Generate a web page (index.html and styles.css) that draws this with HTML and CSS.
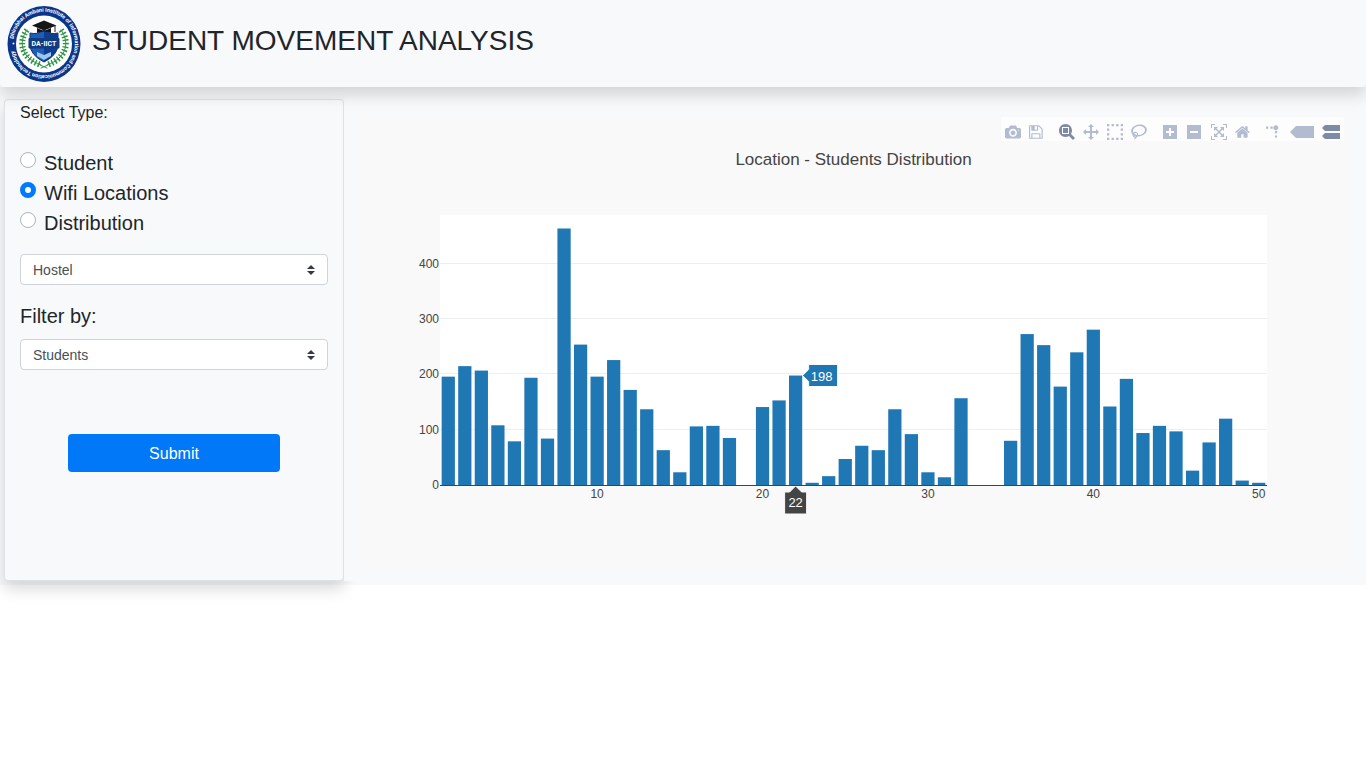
FILE: index.html
```html
<!DOCTYPE html>
<html lang="en">
<head>
<meta charset="utf-8">
<meta name="viewport" content="width=device-width, initial-scale=1">
<title>Student Movement Analysis</title>
<link rel="stylesheet" href="styles.css">
</head>
<body>
<header class="topbar">
  <svg class="logo" viewBox="0 0 148 152" role="img" aria-label="DA-IICT">
    <g transform="scale(2)">
    <ellipse cx="37" cy="38" rx="36.5" ry="38" fill="#0b3589"/>
    <ellipse cx="37" cy="38" rx="28" ry="28.5" fill="#fff"/>
    <g fill="none" stroke="#2e9445" stroke-linecap="round">
      <path d="M20 24C11 36 14 52 34 59M54 24C63 36 60 52 40 59" stroke-width="1"/>
      <path d="M20 24C11 36 14 52 34 59M54 24C63 36 60 52 40 59" stroke-width="6" stroke-dasharray="1.5 2" stroke-linecap="butt"/>
      <path d="M33 59l7 3M41 59l-7 3" stroke-width="1"/>
    </g>
    <path d="M23 27q8 2 14-3 6 5 14 3v11q0 11-14 18-14-7-14-18z" fill="#1c5fb8" stroke="#12336b"/>
    <path d="M37 24q6 5 14 3v11q0 11-14 18z" fill="#0c3f94"/>
    <path d="M30 46l7 3 7-3v4l-7 4-7-4z" fill="#9ec7ee"/>
    <path d="M25 19.500l12-5 12.500 5-12.500 5z" fill="#161616"/>
    <path d="M30 22v5q7-3 14 0v-5l-7 3z" fill="#161616"/>
    <path d="M48 20v6" stroke="#222" stroke-width="1"/>
    <rect x="21.500" y="32" width="31" height="10.500" rx="1" fill="#123b80"/>
    </g>
    <path id="ring" d="M13 66 A61.600 63.600 0 1 1 13 84" fill="none"/>
    <circle cx="13" cy="75" r="2" fill="#fff"/>
    <text class="logo-ring"><textPath href="#ring">Dhirubhai Ambani Institute of Information and Communication Technology</textPath></text>
    <text class="logo-name" x="74" y="80">DA-IICT</text>
  </svg>
  <h1 class="title">STUDENT MOVEMENT ANALYSIS</h1>
</header>
<main class="content">
  <form class="panel" onsubmit="return false">
    <fieldset class="types">
      <legend class="legend">Select Type:</legend>
      <label class="choice"><input class="radio" type="radio" name="type">Student</label>
      <label class="choice"><input class="radio" type="radio" name="type" checked>Wifi Locations</label>
      <label class="choice"><input class="radio" type="radio" name="type">Distribution</label>
    </fieldset>
    <div class="select-wrap">
      <select class="select" aria-label="Location"><option>Hostel</option></select>
      <svg class="caret" viewBox="0 0 4 5"><path d="M2 0L0 2h4zm0 5L0 3h4z"/></svg>
    </div>
    <label class="filter-label" for="filter">Filter by:</label>
    <div class="select-wrap">
      <select class="select" id="filter"><option>Students</option></select>
      <svg class="caret" viewBox="0 0 4 5"><path d="M2 0L0 2h4zm0 5L0 3h4z"/></svg>
    </div>
    <button class="submit" type="submit">Submit</button>
  </form>
  <section class="chart-column">
    <div class="chart">
      <div class="modebar">
        <div class="group">
          <button class="tool" aria-label="Download plot"><svg viewBox="0 0 1000 1000" width="16" height="16"><path transform="matrix(1 0 0 -1 0 850)" d="m500 450c-83 0-150-67-150-150 0-83 67-150 150-150 83 0 150 67 150 150 0 83-67 150-150 150z m400 150h-120c-16 0-34 13-39 29l-31 93c-6 15-23 28-40 28h-340c-16 0-34-13-39-28l-31-94c-6-15-23-28-40-28h-120c-55 0-100-45-100-100v-450c0-55 45-100 100-100h800c55 0 100 45 100 100v450c0 55-45 100-100 100z m-400-550c-138 0-250 112-250 250 0 138 112 250 250 250 138 0 250-112 250-250 0-138-112-250-250-250z m365 380c-19 0-35 16-35 35 0 19 16 35 35 35 19 0 35-16 35-35 0-19-16-35-35-35z"/></svg></button>
          <button class="tool" aria-label="Save"><svg viewBox="0 0 875 1000" width="14" height="16"><path transform="matrix(1 0 0 -1 0 850)" d="m214-7h429v214h-429v-214z m500 0h72v500q0 8-6 21t-11 20l-157 156q-5 6-19 12t-22 5v-232q0-22-15-38t-38-16h-322q-22 0-37 16t-16 38v232h-72v-714h72v232q0 22 16 38t37 16h465q22 0 38-16t15-38v-232z m-214 518v178q0 8-5 13t-13 5h-107q-7 0-13-5t-5-13v-178q0-8 5-13t13-5h107q7 0 13 5t5 13z m357-18v-518q0-22-15-38t-38-16h-750q-23 0-38 16t-16 38v750q0 22 16 38t38 16h517q23 0 50-12t42-26l156-157q16-15 27-42t11-49z"/></svg></button>
        </div>
        <div class="group">
          <button class="tool active" aria-label="Zoom"><svg viewBox="0 0 1000 1000" width="16" height="16"><path transform="matrix(1 0 0 -1 0 850)" d="m1000-25l-250 251c40 63 63 138 63 218 0 224-182 406-407 406-224 0-406-182-406-406s183-406 407-406c80 0 155 22 218 62l250-250 125 125z m-812 250l0 438 437 0 0-438-437 0z m62 375l313 0 0-312-313 0 0 312z"/></svg></button>
          <button class="tool" aria-label="Pan"><svg viewBox="0 0 1000 1000" width="16" height="16"><path transform="matrix(1 0 0 -1 0 850)" d="m1000 350l-187 188 0-125-250 0 0 250 125 0-188 187-187-187 125 0 0-250-250 0 0 125-188-188 186-187 0 125 252 0 0-250-125 0 187-188 188 188-125 0 0 250 250 0 0-126 187 188z"/></svg></button>
          <button class="tool" aria-label="Box select"><svg viewBox="0 0 1000 1000" width="16" height="16"><path d="M0 0h143v143H0zM286 0h143v143H286zM571 0h143v143H571zM857 0h143v143H857zM0 286h143v143H0zM857 286h143v143H857zM0 571h143v143H0zM857 571h143v143H857zM0 857h143v143H0zM286 857h143v143H286zM571 857h143v143H571zM857 857h143v143H857z"/></svg></button>
          <button class="tool" aria-label="Lasso select"><svg viewBox="0 0 1031 1000" width="16" height="16"><path transform="matrix(1 0 0 -1 0 850)" d="m1018 538c-36 207-290 336-568 286-277-48-473-256-436-463 10-57 36-108 76-151-13-66 11-137 68-183 34-28 75-41 114-42l-55-70 0 0c-2-1-3-2-4-3-10-14-8-34 5-45 14-11 34-8 45 4 1 1 2 3 2 5l0 0 113 140c16 11 31 24 45 40 4 3 6 7 8 11 48-3 100 0 151 9 278 48 473 255 436 462z m-624-379c-80 14-149 48-197 96 42 42 109 47 156 9 33-26 47-66 41-105z m-187-74c-19 16-33 37-39 60 50-32 109-55 174-68-42-25-95-24-135 8z m360 75c-34-7-69-9-102-8 8 62-16 128-68 170-73 59-175 54-244-5-9 20-16 40-20 61-28 159 121 317 333 354s407-60 434-217c28-159-121-318-333-355z"/></svg></button>
        </div>
        <div class="group">
          <button class="tool" aria-label="Zoom in"><svg viewBox="0 0 1000 1000" width="16" height="16"><path transform="matrix(1 0 0 -1 0 850)" d="m1 787l0-875 875 0 0 875-875 0z m687-500l-187 0 0-187-125 0 0 187-188 0 0 125 188 0 0 187 125 0 0-187 187 0 0-125z"/></svg></button>
          <button class="tool" aria-label="Zoom out"><svg viewBox="0 0 1000 1000" width="16" height="16"><path transform="matrix(1 0 0 -1 0 850)" d="m0 788l0-876 875 0 0 876-875 0z m688-500l-500 0 0 125 500 0 0-125z"/></svg></button>
          <button class="tool" aria-label="Autoscale"><svg viewBox="0 0 1000 1000" width="16" height="16"><path transform="matrix(1 0 0 -1 0 850)" d="m250 850l-187 0-63 0 0-62 0-188 63 0 0 188 187 0 0 62z m688 0l-188 0 0-62 188 0 0-188 62 0 0 188 0 62-62 0z m-875-938l0 188-63 0 0-188 0-62 63 0 187 0 0 62-187 0z m875 188l0-188-188 0 0-62 188 0 62 0 0 62 0 188-62 0z m-125 188l-1 0-93-94-156 156 156 156 92-93 2 0 0 250-250 0 0-2 93-92-156-156-156 156 94 92 0 2-250 0 0-250 0 0 93 93 157-156-157-156-93 94 0 0 0-250 250 0 0 0-94 93 156 157 156-157-93-93 0 0 250 0 0 250z"/></svg></button>
          <button class="tool" aria-label="Reset axes"><svg viewBox="0 0 938 1000" width="15" height="16"><path transform="matrix(1 0 0 -1 0 850)" d="m786 296v-267q0-15-11-26t-25-10h-214v214h-143v-214h-214q-15 0-25 10t-11 26v267q0 1 0 2t0 2l321 264 321-264q1-1 1-4z m124 39l-34-41q-5-5-12-6h-2q-7 0-12 3l-386 322-386-322q-7-4-13-4-7 2-12 7l-35 41q-4 5-3 13t6 12l401 334q18 15 42 15t43-15l136-114v109q0 8 5 13t13 5h107q8 0 13-5t5-13v-227l122-102q5-5 6-12t-4-13z"/></svg></button>
        </div>
        <div class="group">
          <button class="tool" aria-label="Toggle spike lines"><svg viewBox="0 0 1000 1000" width="16" height="16"><path transform="matrix(1.5 0 0 -1.5 0 850)" d="M512 409c0-57-46-104-103-104-57 0-104 47-104 104 0 57 47 103 104 103 57 0 103-46 103-103zM185 370l92 0 0 92-92 0zM0 370l92 0 0 92-92 0zM370 184l92 0 0 93-92 0zM370 0l92 0 0 92-92 0z"/></svg></button>
          <button class="tool" aria-label="Show closest data"><svg viewBox="0 0 1500 1000" width="24" height="16"><path transform="matrix(1 0 0 -1 0 850)" d="m375 725l0 0-375-375 375-374 0-1 1125 0 0 750-1125 0z"/></svg></button>
          <button class="tool active" aria-label="Compare data"><svg viewBox="0 0 1125 1000" width="18" height="16"><path transform="matrix(1 0 0 -1 0 850)" d="m187 786l0 2-187-188 188-187 0 0 937 0 0 373-938 0z m0-499l0 1-187-188 188-188 0 0 937 0 0 376-938-1z"/></svg></button>
        </div>
      </div>
      <h2 class="chart-title">Location - Students Distribution</h2>
      <svg class="plot" role="img" aria-label="Students per location">
        <rect width="100%" height="100%" fill="#fff"/>
        <g id="grid"></g>
        <svg id="bars" width="100%" height="100%" preserveAspectRatio="none"></svg>
        <line class="axis" x1="0" x2="100%" y1="270.500" y2="270.500"/>
        <g id="ticks"></g>
        <svg class="hover" x="43%" y="160.500">
          <path class="hover-value" d="M7 0l6-6v-5h29v22H13V6z"/>
          <text class="hover-text" x="26" y="5">198</text>
        </svg>
        <svg class="hover" x="43%" y="271">
          <path class="hover-x" d="M0 0l6 6h5v22h-22V6h5z"/>
          <text class="hover-text" x="0" y="21">22</text>
        </svg>
      </svg>
    </div>
  </section>
</main>
<script src="chart.js"></script>
</body>
</html>
```
FILE: styles.css
```css
*, *::before, *::after { box-sizing: border-box; }
body {
  margin: 0;
  min-height: 100vh;
  background: #fff;
  color: #212529;
  font: 16px/24px "Liberation Sans", Arial, sans-serif;
}
.topbar {
  position: relative;
  z-index: 2;
  display: flex;
  align-items: flex-start;
  gap: 11px;
  padding: 6px 7px 5px;
  background: #f8f9fb;
  border-radius: 0 0 4px 4px;
  box-shadow: 0 8px 16px rgba(0, 0, 0, .15);
}
.logo { width: 74px; height: 76px; flex: none; }
.logo-ring { font: 700 11px Roboto, "Liberation Sans", sans-serif; fill: #fff; }
.logo-name { font: 700 14px Roboto, "Liberation Sans", sans-serif; fill: #fff; text-anchor: middle; }
.title { margin: 18px 0 0; font-size: 28px; line-height: 34px; font-weight: 400; }

.content {
  display: flex;
  align-items: flex-start;
  padding: 12px 4px 4px;
  background: #f8f9fb;
}
.panel {
  flex: 0 0 340px;
  min-height: 482px;
  padding: 1px 15px 16px;
  background: #f8f9fb;
  border: 1px solid #dee2e6;
  border-radius: 4px;
  box-shadow: 0 8px 16px rgba(0, 0, 0, .15);
}
.types { margin: 0 0 16px; padding: 0; border: 0; }
.legend { margin-bottom: 23px; padding: 0; }
.choice { display: flex; gap: 8px; font-size: 20px; line-height: 30px; }
.radio {
  appearance: none;
  width: 16px;
  height: 16px;
  margin: 4px 0 0;
  background: #fff;
  border: 1px solid #adb5bd;
  border-radius: 50%;
}
.radio:checked { border: 5px solid #007bff; }
.select-wrap { position: relative; }
.select {
  appearance: none;
  display: block;
  width: 100%;
  height: 31px;
  padding: 2px 28px 0 12px;
  color: #495057;
  background: #fff;
  border: 1px solid #ced4da;
  border-radius: 4px;
  font: 14px/21px "Liberation Sans", Arial, sans-serif;
}
.caret { position: absolute; right: 13px; top: 11px; width: 8px; height: 10px; fill: #343a40; pointer-events: none; }
.filter-label { display: block; margin: 19px 0 11px; font-size: 20px; line-height: 24px; }
.submit {
  display: block;
  width: 212px;
  margin: 64px auto 0;
  padding: 8px 12px 6px;
  color: #fff;
  background: #0078f8;
  border: 0;
  border-radius: 4px;
  font: 16px/24px "Liberation Sans", Arial, sans-serif;
}

.chart-column {
  position: relative;
  flex: 1;
  min-width: 0;
  padding: 16px 15px 16px 16px;
  background: #f8f9fb;
}
.chart { padding: 2px 3px 80px; background: #f9f9f9; }
.modebar { display: flex; width: max-content; margin-left: auto; padding-bottom: 1px; background: rgba(255, 255, 255, .7); }
.group { display: flex; }
.group + .group { padding-left: 8px; }
.tool { display: flex; align-items: flex-end; height: 23px; margin: 0; padding: 0 4px; border: 0; background: none; fill: rgba(68, 88, 140, .4); }
.tool.active { fill: rgba(50, 68, 110, .62); }
.chart-title { margin: 7px 0 43px; color: #444; font-size: 17px; line-height: 24px; font-weight: 400; text-align: center; }
.plot { display: block; width: calc(100% - 154px); height: 270px; margin: 0 77px; overflow: visible; }
.bar { fill: #1f77b4; }
.gridline { stroke: #eee; shape-rendering: crispEdges; }
.axis { stroke: #444; }
.tick-x { fill: #444; font-size: 12px; text-anchor: middle; }
.tick-y { fill: #444; font-size: 12px; text-anchor: end; }
.hover { overflow: visible; }
.hover-value { fill: #1f77b4; stroke: #f9f9f9; }
.hover-x { fill: #444; stroke: #f9f9f9; }
.hover-text { fill: #fff; font-size: 13px; text-anchor: middle; }
```
FILE: chart.js
```js
const values = [
  196, 215, 207, 108, 79, 194, 84, 464, 254, 196,
  226, 172, 137, 63, 23, 106, 107, 85, 0, 141,
  153, 198, 4, 16, 47, 71, 63, 137, 92, 23,
  14, 157, 0, 0, 80, 273, 253, 178, 240, 281,
  142, 192, 94, 107, 97, 26, 77, 120, 8, 4
];
const yMax = Math.max(...values) / 0.95;
const bars = document.getElementById("bars");
bars.setAttribute("viewBox", `0 0 ${values.length} ${yMax}`);

function add(parentId, name, attributes, text) {
  const node = document.createElementNS("http://www.w3.org/2000/svg", name);
  for (const key in attributes) node.setAttribute(key, attributes[key]);
  if (text !== undefined) node.textContent = text;
  document.getElementById(parentId).appendChild(node);
}

values.forEach((value, i) => {
  add("bars", "rect", { class: "bar", x: i + 0.1, y: yMax - value, width: 0.8, height: value });
});

for (let v = 0; v <= 400; v += 100) {
  const y = 270 - Math.round(v / yMax * 270);
  if (v > 0) add("grid", "line", { class: "gridline", x1: 0, x2: "100%", y1: y - 0.5, y2: y - 0.5 });
  add("ticks", "text", { class: "tick-y", x: -1, y: y + 4 }, v);
}

for (let n = 10; n <= 50; n += 10) {
  add("ticks", "text", { class: "tick-x", x: (n - 0.5) / values.length * 100 + "%", y: 283 }, n);
}
```
